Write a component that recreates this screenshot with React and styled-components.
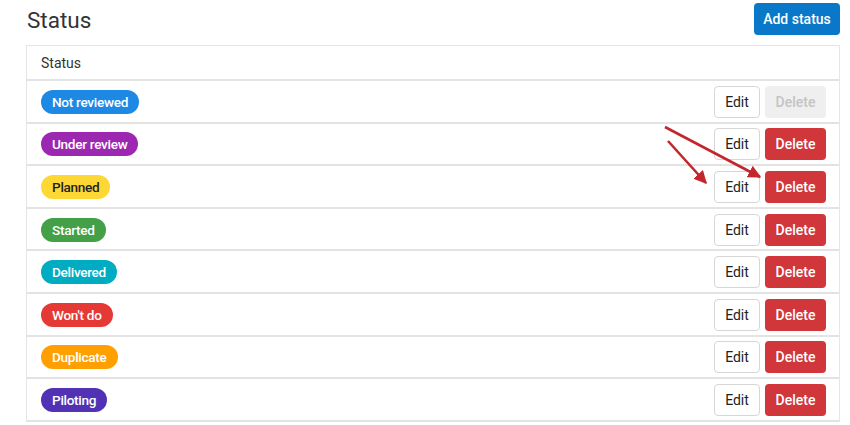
import React from "react";
import styled, { createGlobalStyle } from "styled-components";

const Global = createGlobalStyle`
  html, body { margin: 0; padding: 0; background: #fff; }
  body { font-family: Roboto, "Liberation Sans", sans-serif; color: #333; }
  * { box-sizing: border-box; }
`;

const Page = styled.div`
  position: relative;
  width: 850px;
  height: 425px;
  padding: 3px 10px 0 26px;
  overflow: hidden;
`;

const TopBar = styled.div`
  display: flex;
  justify-content: space-between;
  align-items: flex-start;
  height: 42px;
`;

const Title = styled.h1`
  margin: 3px 0 0 1px;
  font-size: 22.5px;
  font-weight: 400;
  line-height: 28px;
  color: #333;
`;

const PrimaryButton = styled.button`
  height: 32px;
  width: 86px;
  border: none;
  border-radius: 4px;
  background: #0a78c8;
  color: #fff;
  font-family: inherit;
  font-size: 14px;
  font-weight: 500;
  padding: 0;
`;

const Table = styled.div`
  border: 1px solid #e6e6e6;
  border-bottom: none;
`;

const HeaderRow = styled.div`
  height: 35px;
  display: flex;
  align-items: center;
  padding: 0 14px;
  font-size: 14px;
  border-bottom: 2px solid #e3e3e3;
  color: #333;
`;

const Row = styled.div`
  height: 42.6px;
  display: flex;
  align-items: center;
  justify-content: space-between;
  padding: 1px 13px 0 14px;
  border-bottom: 2px solid #e3e3e3;
`;

const Pill = styled.span`
  display: inline-flex;
  align-items: center;
  height: 24px;
  padding: 0 11px;
  border-radius: 12px;
  background: ${(p) => p.$bg};
  color: ${(p) => p.$fg || "#fff"};
  font-size: 13.6px;
  font-weight: 500;
  letter-spacing: -0.3px;
`;

const Actions = styled.div`
  display: flex;
  gap: 5px;
`;

const EditButton = styled.button`
  height: 32px;
  width: 46px;
  border: 1px solid #d6d6d6;
  border-radius: 4px;
  background: #fff;
  color: #222;
  font-family: inherit;
  font-size: 14px;
  padding: 0;
`;

const DeleteButton = styled.button`
  height: 32px;
  width: 61px;
  border: none;
  border-radius: 4px;
  background: ${(p) => (p.disabled ? "#efefef" : "#d0363a")};
  color: ${(p) => (p.disabled ? "#c4c4c4" : "#fff")};
  font-family: inherit;
  font-size: 14px;
  font-weight: 500;
  padding: 0;
`;

const Overlay = styled.svg`
  position: absolute;
  left: 0;
  top: 0;
  pointer-events: none;
`;

const statuses = [
  { name: "Not reviewed", bg: "#1e88e5", disabled: true },
  { name: "Under review", bg: "#9c27b0" },
  { name: "Planned", bg: "#fdd835", fg: "#222" },
  { name: "Started", bg: "#43a047" },
  { name: "Delivered", bg: "#00acc1" },
  { name: "Won't do", bg: "#e53935" },
  { name: "Duplicate", bg: "#ffa000" },
  { name: "Piloting", bg: "#5132b4" },
];

export default function App() {
  return (
    <>
      <Global />
      <Page>
        <TopBar>
          <Title>Status</Title>
          <PrimaryButton>Add status</PrimaryButton>
        </TopBar>
        <Table>
          <HeaderRow>Status</HeaderRow>
          {statuses.map((s) => (
            <Row key={s.name}>
              <Pill $bg={s.bg} $fg={s.fg}>{s.name}</Pill>
              <Actions>
                <EditButton>Edit</EditButton>
                <DeleteButton disabled={s.disabled}>Delete</DeleteButton>
              </Actions>
            </Row>
          ))}
        </Table>
        <Overlay width="850" height="425" viewBox="0 0 850 425">
          <defs>
            <marker id="ah" viewBox="0 0 10 10" refX="9" refY="5" markerWidth="5" markerHeight="5" orient="auto">
              <path d="M0,0 L10,5 L0,10 z" fill="#c1272d" />
            </marker>
          </defs>
          <line x1="665" y1="127" x2="760" y2="177" stroke="#c1272d" strokeWidth="2.6" markerEnd="url(#ah)" />
          <line x1="668" y1="141" x2="706" y2="183" stroke="#c1272d" strokeWidth="2.6" markerEnd="url(#ah)" />
        </Overlay>
      </Page>
    </>
  );
}
